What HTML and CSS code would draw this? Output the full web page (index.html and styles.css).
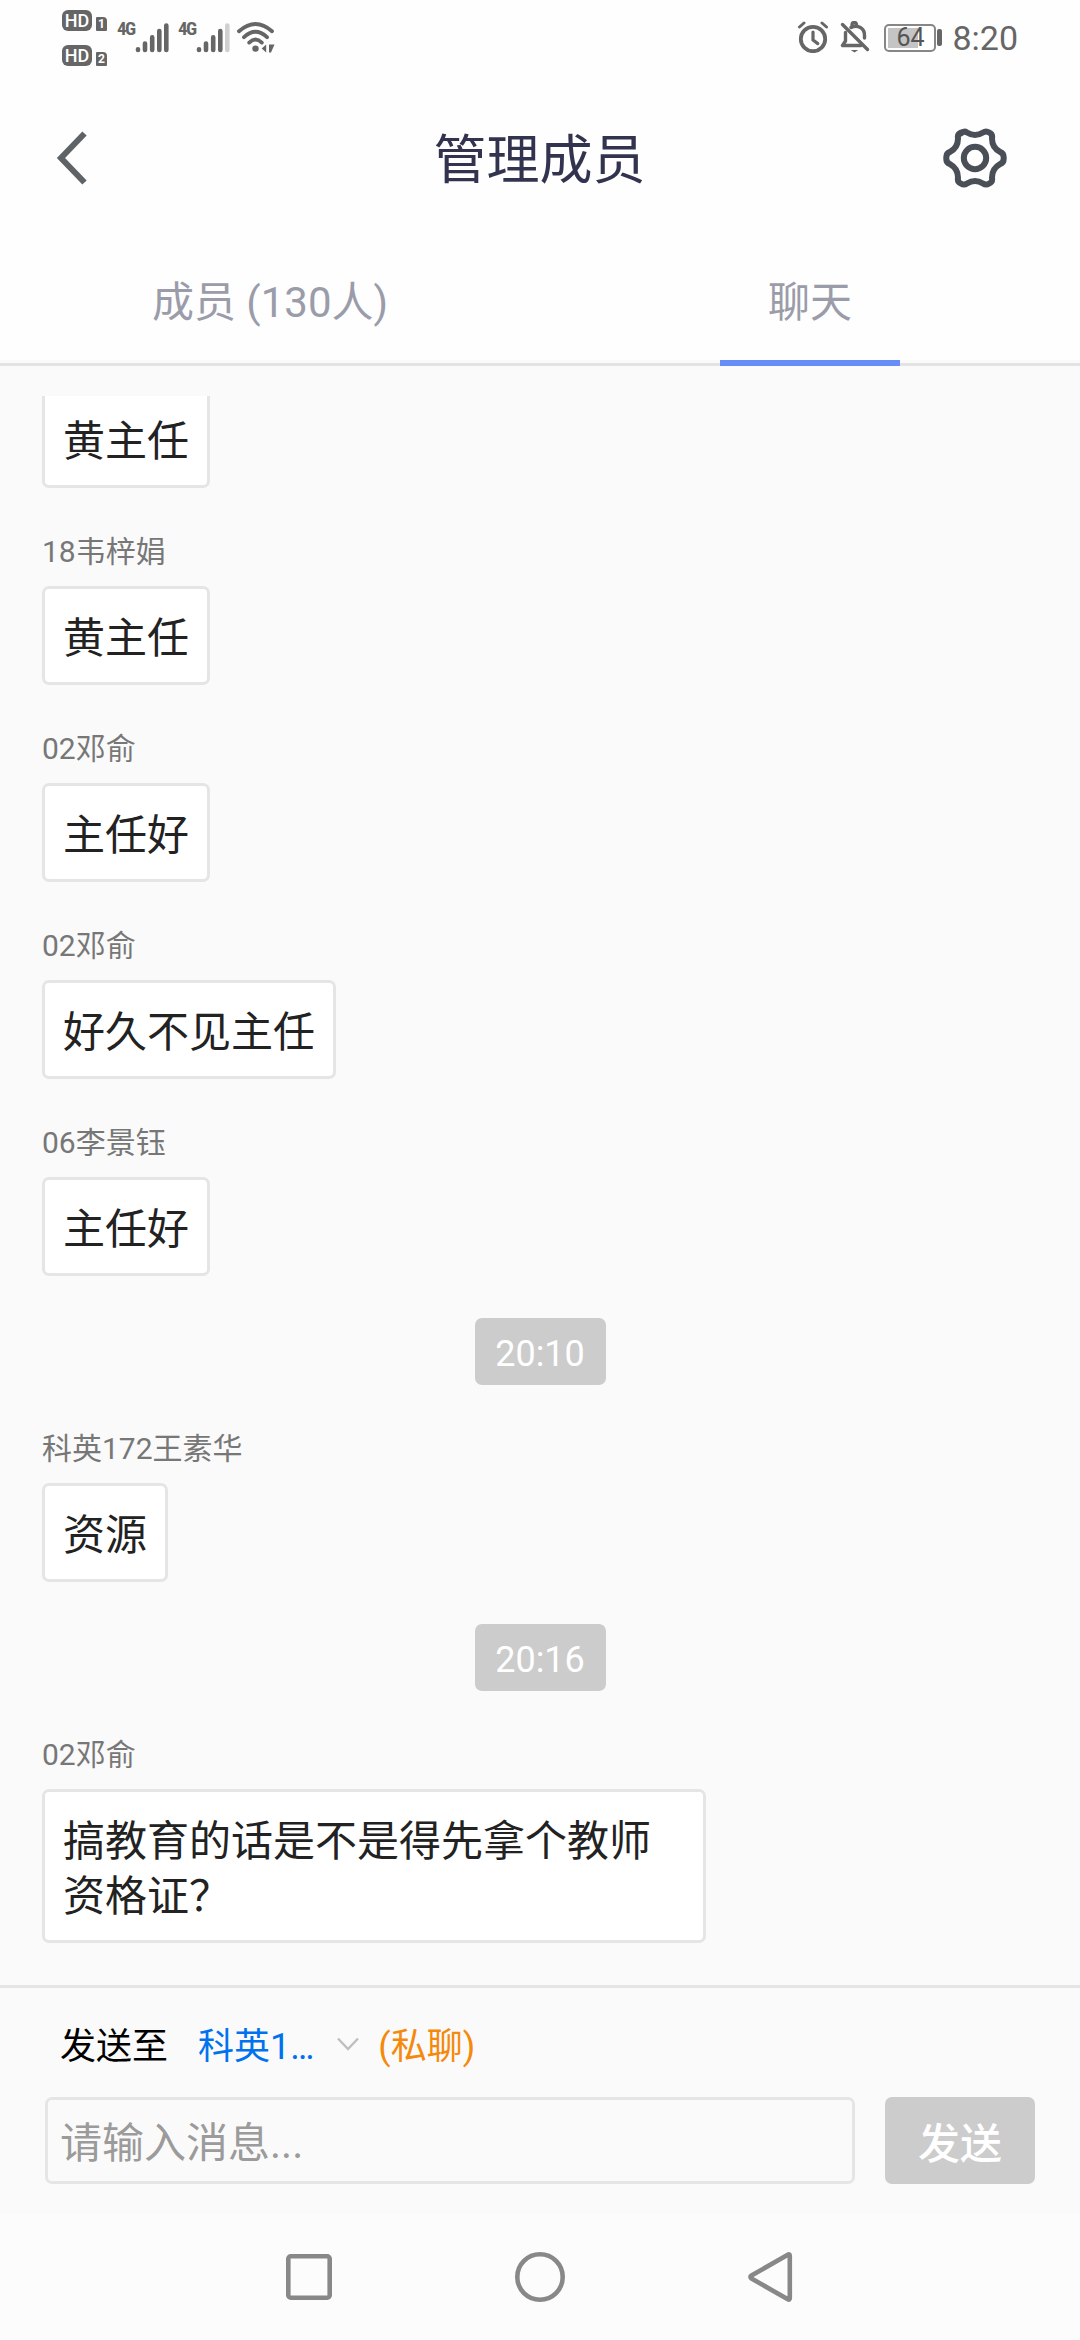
FILE: index.html
```html
<!DOCTYPE html>
<html lang="zh-CN">
<head>
  <meta charset="utf-8">
  <meta name="viewport" content="width=device-width, initial-scale=1">
  <title>管理成员</title>
  <link rel="stylesheet" href="styles.css">
</head>
<body>

  <div class="status-bar">
    <div class="hd-list">
      <div class="hd-row"><span class="hd">HD</span><span class="sim">1</span></div>
      <div class="hd-row"><span class="hd">HD</span><span class="sim">2</span></div>
    </div>
    <span class="net">4G</span>
    <svg class="signal" width="32" height="32" viewBox="0 0 32 32" stroke="#666" stroke-width="4.6" stroke-linecap="round">
      <path d="M3 29v-.8M10 29v-6.5M17.2 29v-12.6M24.3 29v-19M31.3 29v-24.4"/>
    </svg>
    <span class="net second">4G</span>
    <svg class="signal" width="32" height="32" viewBox="0 0 32 32" stroke="#666" stroke-width="4.6" stroke-linecap="round">
      <path d="M3 29v-.8M10 29v-6.5M17.2 29v-12.6M24.3 29v-19"/>
      <path d="M31.3 29v-24.4" stroke="#d0d0d0"/>
    </svg>
    <svg class="wifi" width="38" height="32" viewBox="0 0 38 32" fill="none" stroke="#666" stroke-width="3.8" stroke-linecap="round">
      <path d="M2 10.3Q18.5 -4.2 35 10.3M7 16.2Q18.5 5.5 30 16.2M12.2 21.6Q18.5 15.6 24.8 21.6"/>
      <circle cx="18.5" cy="27.6" r="3.2" fill="#666" stroke="none"/>
      <path d="M29.2 23.5v8l-4.5-4zM32 23.5h5.5l-3.5 8h-2z" fill="#666" stroke="none"/>
    </svg>

    <div class="status-right">
      <svg width="32" height="32" viewBox="0 0 32 32" fill="none" stroke="#666" stroke-width="3.8" stroke-linecap="round">
        <circle cx="16" cy="18" r="12.2"/>
        <path d="M16 11v8l4.8 3.6" stroke-width="3.2"/>
        <path d="M2.5 6l4.5-4M29.5 6l-4.5-4" stroke-width="3"/>
      </svg>
      <svg class="bell" width="30" height="32" viewBox="0 0 30 32" fill="none" stroke="#666" stroke-width="3.4" stroke-linecap="round">
        <path d="M5.5 11.5v8.500L2.500 24.500h18.500M11 6.500c7-3.500 13.500 1 13.500 7.500v3M12 4.500c0-4 4.500-4 4.500 0" stroke-linejoin="round"/>
        <path d="M10.8 29h7.400l-3.700 2.500z" fill="#666" stroke="none"/>
        <path d="M2.5 3.5l25 25"/>
      </svg>
      <div class="battery"><span class="level"></span><span class="percent">64</span></div>
      <div class="battery-cap"></div>
      <span class="clock">8:20</span>
    </div>
  </div>

  <header class="header">
    <svg width="34" height="54" viewBox="0 0 34 54" fill="none" stroke="#5f6366" stroke-width="6">
      <path d="M29.5 2.5L6 27l23.5 24.5"/>
    </svg>
    <h1 class="title">管理成员</h1>
    <svg width="64" height="60" viewBox="-32 -30 64 60" fill="none" stroke="#4a4f57" stroke-width="6" stroke-linejoin="round">
      <path d="M-14 -24.5Q-11 -27.5 -8 -25.5Q0 -20.5 8 -25.5Q11 -27.5 14.2 -25.5Q17.8 -24 17 -19.6Q17 -10.6 25 -6.2Q29 -4.8 28.7 0Q29 4.8 25 6.2Q17 10.6 17 19.6Q17.8 24 14.2 25.5Q11 27.5 8 25.5Q0 20.5 -8 25.5Q-11 27.5 -14.2 25.5Q-17.8 24 -17 19.6Q-17 10.6 -25 6.2Q-29 4.8 -28.7 0Q-29 -4.8 -25 -6.2Q-17 -10.6 -17 -19.6Q-17.8 -24 -14 -25.5z"/>
      <circle r="11.2"/>
    </svg>
  </header>

  <nav class="tabs">
    <div class="tab">成员 (130人)</div>
    <div class="tab active">聊天</div>
  </nav>

  <main class="messages">
    <div class="message">
      <div class="bubble">黄主任</div>
    </div>
    <div class="message">
      <div class="name">18韦梓娟</div>
      <div class="bubble">黄主任</div>
    </div>
    <div class="message">
      <div class="name">02邓俞</div>
      <div class="bubble">主任好</div>
    </div>
    <div class="message">
      <div class="name">02邓俞</div>
      <div class="bubble">好久不见主任</div>
    </div>
    <div class="message">
      <div class="name">06李景钰</div>
      <div class="bubble">主任好</div>
    </div>
    <div class="time">20:10</div>
    <div class="message">
      <div class="name">科英172王素华</div>
      <div class="bubble">资源</div>
    </div>
    <div class="time">20:16</div>
    <div class="message">
      <div class="name">02邓俞</div>
      <div class="bubble">搞教育的话是不是得先拿个教师资格证？</div>
    </div>
  </main>

  <footer class="composer">
    <div class="send-to">
      <span class="label">发送至</span>
      <span class="target">科英1…</span>
      <svg class="arrow" width="22" height="14" viewBox="0 0 22 14" fill="none" stroke="#bfbfbf" stroke-width="2.4">
        <path d="M1 1.5l10 10.500 10-10.500"/>
      </svg>
      <span class="private">(私聊)</span>
    </div>
    <div class="send-row">
      <input class="input" type="text" placeholder="请输入消息...">
      <button class="send">发送</button>
    </div>
  </footer>

  <div class="nav-bar">
    <svg width="52" height="52" viewBox="0 0 52 52"><rect x="5.3" y="5.3" width="41.4" height="41.4" rx="2.5"/></svg>
    <svg width="52" height="52" viewBox="0 0 52 52"><circle cx="26" cy="26" r="22.7"/></svg>
    <svg width="52" height="52" viewBox="0 0 52 52"><path d="M42.8 3.800Q44.800 2.500 44.800 5v42q0 2.500-2 1.200L6.500 27.500q-2.200-1.500 0-3z"/></svg>
  </div>

</body>
</html>
```

FILE: styles.css
```css
* {
  box-sizing: border-box;
}
body {
  margin: 0;
  width: 1080px;
  height: 2340px;
  display: flex;
  flex-direction: column;
  overflow: hidden;
  background: #fafafa;
  font-family: Roboto, "Noto Sans CJK SC", sans-serif;
}
svg {
  display: block;
  flex: none;
}

/* system status bar */
.status-bar {
  display: flex;
  height: 80px;
  padding: 10px 62px 0;
  background: #fefefe;
  color: #666;
}
.hd-list {
  display: flex;
  flex-direction: column;
  gap: 14px;
  width: 45px;
}
.hd-row {
  display: flex;
  align-items: flex-end;
  gap: 4px;
}
.hd {
  width: 30px;
  height: 21px;
  border-radius: 6px;
  background: #666;
  color: #fff;
  font-size: 18px;
  font-weight: 500;
  line-height: 21px;
  text-align: center;
}
.sim {
  width: 11px;
  height: 14px;
  border-radius: 1px 4px 1px 1px;
  background: #666;
  color: #fff;
  font-size: 12px;
  font-weight: 700;
  line-height: 14px;
  text-align: center;
}
.net {
  width: 28px;
  padding: 9px 0 0 10px;
  font-family: "Roboto Condensed", Roboto, sans-serif;
  font-size: 19px;
  font-weight: 700;
  line-height: 20px;
  letter-spacing: -1.5px;
}
.net.second {
  width: 29px;
  padding-left: 11px;
}
.signal {
  margin-top: 11px;
  overflow: visible;
}
.wifi {
  margin: 11px 0 0 9px;
}
.status-right {
  display: flex;
  margin-left: auto;
  padding-top: 11px;
}
.bell {
  margin-left: 11px;
}
.battery {
  position: relative;
  width: 52px;
  height: 28px;
  margin: 3px 0 0 14px;
  border: 2px solid #868686;
  border-radius: 5px;
}
.level {
  display: block;
  width: 30px;
  height: 20px;
  margin: 2px;
  background: #c4c4c4;
}
.percent {
  position: absolute;
  inset: 0;
  font-size: 25px;
  line-height: 24px;
  text-align: center;
  color: #555;
}
.battery-cap {
  width: 5px;
  height: 17px;
  margin: 8px 10px 0 1px;
  border-radius: 2px;
  background: #666;
}
.clock {
  font-size: 34px;
  line-height: 35px;
}

/* title and tabs */
.header {
  display: flex;
  align-items: center;
  justify-content: space-between;
  height: 156px;
  padding: 0 73px 0 55px;
  background: #fefefe;
}
.title {
  margin: 0 0 4px 47px;
  font-size: 53px;
  font-weight: 400;
  color: #32344f;
}
.tabs {
  display: flex;
  height: 130px;
  background: linear-gradient(#fefefe 124px, #fafafa 124px);
  border-bottom: 3px solid #e3e3e3;
}
.tab {
  display: flex;
  flex: 1;
  justify-content: center;
  height: 130px;
  padding-top: 37px;
  font-size: 42px;
  line-height: 60px;
  color: #9b9ca9;
}
.tab.active {
  position: relative;
}
.tab.active::after {
  content: "";
  position: absolute;
  left: 180px;
  bottom: 0;
  width: 180px;
  height: 6px;
  background: #668cf8;
}

/* chat */
.messages {
  display: flex;
  flex-direction: column;
  justify-content: flex-end;
  gap: 42px;
  height: 1589px;
  margin-top: 30px;
  padding: 0 42px 42px;
  overflow: hidden;
}
.message {
  display: flex;
  flex: none;
  flex-direction: column;
  align-items: flex-start;
}
.name {
  margin-bottom: 12px;
  font-size: 30px;
  line-height: 44px;
  color: #777;
}
.bubble {
  max-width: 664px;
  padding: 22px 18px 16px;
  border: 3px solid #e5e5e5;
  border-radius: 7px;
  background: #fff;
  font-size: 42px;
  line-height: 55px;
  color: #222;
}
.time {
  flex: none;
  align-self: center;
  width: 131px;
  height: 67px;
  border-radius: 7px;
  background: #ccc;
  color: #fff;
  font-size: 36px;
  line-height: 72px;
  text-align: center;
}

/* composer */
.composer {
  height: 229px;
  padding: 0 45px;
  border-top: 3px solid #e5e5e5;
}
.send-to {
  display: flex;
  align-items: center;
  height: 109px;
  padding-left: 15px;
  font-size: 36px;
}
.target {
  margin-left: 30px;
  color: #0072ee;
}
.arrow {
  margin: 2px 19px 0 23px;
}
.private {
  color: #f5890b;
}
.send-row {
  display: flex;
  gap: 30px;
}
.input,
.send {
  height: 87px;
  border-radius: 7px;
  font-family: inherit;
  font-size: 42px;
}
.input {
  flex: 1;
  min-width: 0;
  padding: 6px 12px 0;
  border: 3px solid #e5e5e5;
  background: transparent;
}
.input::placeholder {
  color: #9b9b9b;
}
.send {
  width: 150px;
  padding: 0;
  border: none;
  background: #ccc;
  color: #fff;
  font-weight: 500;
}

/* system navigation */
.nav-bar {
  display: flex;
  justify-content: center;
  gap: 179px;
  height: 126px;
  padding-top: 37px;
  background: #fcfcfc;
}
.nav-bar svg {
  fill: none;
  stroke: #888;
  stroke-width: 4.6;
}
```
